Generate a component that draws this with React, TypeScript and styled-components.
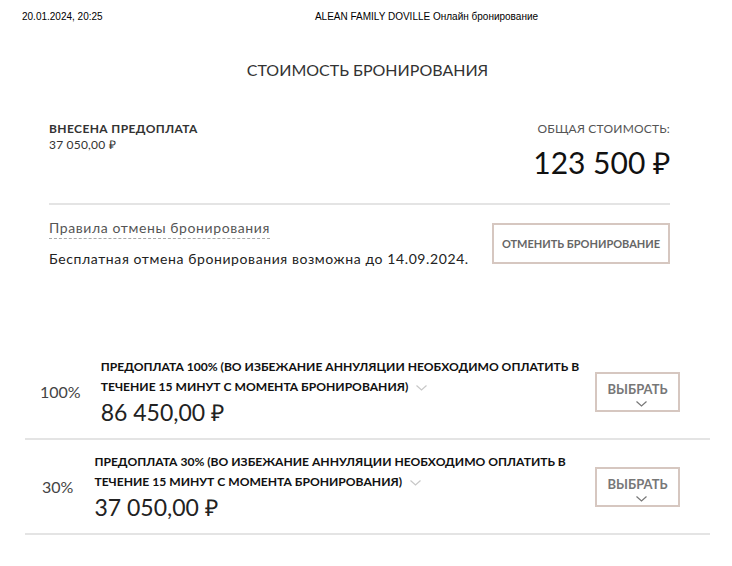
import React from "react";
import styled, { createGlobalStyle } from "styled-components";

const Global = createGlobalStyle`
  html, body { margin: 0; padding: 0; background: #fff; }
  body { font-family: Lato, "Open Sans", sans-serif; color: #222; }
  * { box-sizing: border-box; }
`;

const PrintHeader = styled.header`
  display: grid;
  grid-template-columns: 123px 1fr;
  padding: 11px 22px 0 22px;
  font-family: "Liberation Sans", Arial, sans-serif;
  font-size: 10px;
  line-height: 12px;
  color: #000;
`;

const HeaderTitle = styled.div`
  text-align: center;
  padding-right: 2px;
`;

const Page = styled.main`
  padding: 0 22px 0 25px;
`;

const PageTitle = styled.h1`
  margin: 37px 0 0;
  text-align: center;
  font-size: 16px;
  line-height: 20px;
  font-weight: 400;
  color: #333;
`;

const Summary = styled.section`
  padding: 0 40px 0 24px;
`;

const Totals = styled.div`
  display: flex;
  justify-content: space-between;
  align-items: flex-start;
  margin-top: 41px;
  padding-bottom: 26px;
  border-bottom: 2px solid #e4e4e4;
`;

const Paid = styled.div`
  display: flex;
  flex-direction: column;
`;

const Label = styled.div<{ $muted?: boolean }>`
  font-size: 12px;
  line-height: 16px;
  font-weight: ${(p) => (p.$muted ? 400 : 700)};
  color: ${(p) => (p.$muted ? "#555" : "#333")};
  letter-spacing: ${(p) => (p.$muted ? "0.2px" : "0.4px")};
  text-transform: uppercase;
`;

const SmallAmount = styled.div`
  font-size: 12px;
  line-height: 16px;
  letter-spacing: 0.2px;
  color: #333;
`;

const Total = styled.div`
  display: flex;
  flex-direction: column;
  align-items: flex-end;
`;

const BigAmount = styled.div`
  font-size: 30px;
  line-height: 40px;
  font-weight: 400;
  color: #111;
  margin-top: 5px;
  margin-bottom: -5px;
`;

const Cancel = styled.div`
  display: flex;
  justify-content: space-between;
  align-items: center;
  padding-top: 14px;
`;

const Rules = styled.div`
  display: flex;
  flex-direction: column;
  align-items: flex-start;
  gap: 11px;
`;

const RulesLink = styled.span`
  font-size: 14px;
  line-height: 18px;
  letter-spacing: 0.6px;
  color: #555;
  border-bottom: 1px dashed #aaa;
  padding-bottom: 1px;
`;

const RulesText = styled.div`
  font-size: 14px;
  line-height: 18px;
  letter-spacing: 0.6px;
  color: #222;
`;

const OutlineButton = styled.button`
  border: 2px solid #d6c7c0;
  background: #fff;
  font-family: inherit;
  font-weight: 700;
  color: #666;
  text-transform: uppercase;
  cursor: pointer;
`;

const CancelButton = styled(OutlineButton)`
  width: 178px;
  height: 41px;
  font-size: 11px;
  padding: 0;
`;

const Tariffs = styled.section`
  margin-top: 77px;
`;

const Row = styled.div`
  display: flex;
  align-items: center;
  padding: 12px 30px 11px 15px;
  border-bottom: 2px solid #e4e4e4;
`;

const Percent = styled.div<{ $indent: number; $gap: number }>`
  font-size: 16px;
  line-height: 20px;
  color: #444;
  margin-left: ${(p) => p.$indent}px;
  margin-right: ${(p) => p.$gap}px;
  flex-shrink: 0;
`;

const RowBody = styled.div`
  flex: 1;
  min-width: 0;
  padding-right: 2px;
`;

const TariffTitle = styled.div`
  font-size: 12.1px;
  line-height: 20px;
  font-weight: 700;
  color: #111;
  text-transform: uppercase;
`;

const Chevron = styled.svg<{ $color: string }>`
  display: inline-block;
  vertical-align: middle;
  margin-left: 8px;
  stroke: ${(p) => p.$color};
`;

const Price = styled.div`
  font-size: 23px;
  line-height: 30px;
  font-weight: 400;
  color: #222;
`;

const SelectButton = styled(OutlineButton)`
  width: 85px;
  height: 40px;
  flex-shrink: 0;
  font-size: 13px;
  padding: 7px 0 3px;
  display: flex;
  flex-direction: column;
  justify-content: space-between;
  align-items: center;
  line-height: 16px;
  color: #777;
`;

const Caret = ({ color, w = 11 }: { color: string; w?: number }) => (
  <Chevron $color={color} width={w} height={6} viewBox="0 0 11 6" fill="none" strokeWidth={1.2}>
    <path d="M0.5 0.5 L5.5 5 L10.5 0.5" />
  </Chevron>
);

const tariffs = [
  { pct: "100%", indent: 0, gap: 20, title: "Предоплата 100% (во избежание аннуляции необходимо оплатить в течение 15 минут с момента бронирования)", price: "86 450,00 ₽" },
  { pct: "30%", indent: 2, gap: 21, title: "Предоплата 30% (во избежание аннуляции необходимо оплатить в течение 15 минут с момента бронирования)", price: "37 050,00 ₽" },
];

export default function App() {
  return (
    <>
      <Global />
      <PrintHeader>
        <div>20.01.2024, 20:25</div>
        <HeaderTitle>ALEAN FAMILY DOVILLE Онлайн бронирование</HeaderTitle>
      </PrintHeader>
      <Page>
        <PageTitle>СТОИМОСТЬ БРОНИРОВАНИЯ</PageTitle>
        <Summary>
          <Totals>
            <Paid>
              <Label>Внесена предоплата</Label>
              <SmallAmount>37 050,00 ₽</SmallAmount>
            </Paid>
            <Total>
              <Label $muted>Общая стоимость:</Label>
              <BigAmount>123 500 ₽</BigAmount>
            </Total>
          </Totals>
          <Cancel>
            <Rules>
              <RulesLink>Правила отмены бронирования</RulesLink>
              <RulesText>Бесплатная отмена бронирования возможна до 14.09.2024.</RulesText>
            </Rules>
            <CancelButton>Отменить бронирование</CancelButton>
          </Cancel>
        </Summary>
        <Tariffs>
          {tariffs.map((t) => (
            <Row key={t.pct}>
              <Percent $indent={t.indent} $gap={t.gap}>{t.pct}</Percent>
              <RowBody>
                <TariffTitle>
                  {t.title}
                  <Caret color="#c8c8c8" />
                </TariffTitle>
                <Price>{t.price}</Price>
              </RowBody>
              <SelectButton>
                Выбрать
                <Caret color="#777" w={11} />
              </SelectButton>
            </Row>
          ))}
        </Tariffs>
      </Page>
    </>
  );
}
